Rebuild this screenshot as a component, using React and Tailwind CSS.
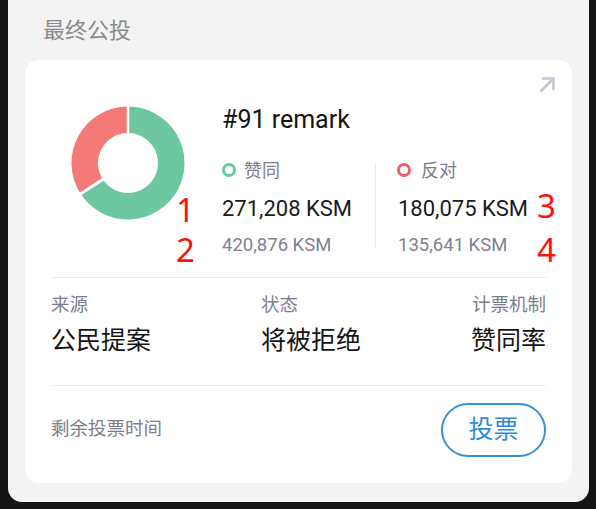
import React from "react";

const FONT = { fontFamily: "Roboto, 'Noto Sans CJK SC', 'Noto Sans', sans-serif" };

function Donut() {
  const c = 57;
  const rMid = 43.25;
  const t = (deg, r) => {
    const a = (deg * Math.PI) / 180;
    return [c + r * Math.sin(a), c - r * Math.cos(a)];
  };
  const split = 237;
  const [sx, sy] = t(0, rMid);
  const [ex, ey] = t(split, rMid);
  const [lx, ly] = t(split, 60);
  return (
    <svg width="114" height="114" viewBox="0 0 114 114">
      <path
        d={`M${sx} ${sy} A${rMid} ${rMid} 0 1 1 ${ex} ${ey}`}
        fill="none"
        stroke="#6dc8a2"
        strokeWidth="26.5"
      />
      <path
        d={`M${ex} ${ey} A${rMid} ${rMid} 0 0 1 ${sx} ${sy}`}
        fill="none"
        stroke="#f47a77"
        strokeWidth="26.5"
      />
      <line x1={c} y1={c} x2={c} y2={-2} stroke="#fff" strokeWidth="2.5" />
      <line x1={c} y1={c} x2={lx} y2={ly} stroke="#fff" strokeWidth="3" />
    </svg>
  );
}

function Ring({ color }) {
  return (
    <span
      className="inline-block w-[14px] h-[14px] rounded-full border-[3.5px] shrink-0"
      style={{ borderColor: color }}
    />
  );
}

const annot = { fontFamily: "'Noto Sans', sans-serif" };

export default function App() {
  return (
    <div className="w-[596px] h-[509px] bg-[#141414] overflow-hidden" style={FONT}>
      <div className="ml-[8px] w-[581px] h-[502px] bg-[#f3f3f3] rounded-b-[14px] px-[17px]">
        <div className="h-[60px] flex items-center pl-[18px] text-[22px] text-[#8a8a8a]">
          最终公投
        </div>
        <div className="relative h-[423px] bg-white rounded-[14px]">
          {/* arrow icon */}
          <svg
            className="absolute right-[16px] top-[16px]"
            width="18"
            height="18"
            viewBox="0 0 18 18"
            fill="none"
            stroke="#c3c7d8"
            strokeWidth="2.6"
          >
            <path d="M4 2.5 H15.5 V14" />
            <path d="M15.5 2.5 L2.5 15.5" />
          </svg>

          {/* top section */}
          <div className="h-[217px] flex">
            <div className="ml-[46px] mt-[46px]">
              <Donut />
            </div>
            <div className="ml-[37px] flex flex-col">
              <div className="mt-[45px] h-[30px] leading-[30px] text-[25px] text-[#141414]">
                #91 remark
              </div>
              <div className="mt-[23px] flex">
                <div className="w-[153px] flex flex-col">
                  <div className="h-[24px] flex items-center gap-[8px] text-[18px] text-[#7d7e8c]">
                    <Ring color="#6cc8a0" />
                    <span>赞同</span>
                  </div>
                  <div className="mt-[13px] h-[28px] leading-[28px] text-[22px] text-[#1b1b1b]">
                    271,208 KSM
                  </div>
                  <div className="mt-[10px] h-[24px] leading-[24px] text-[18.5px] text-[#80818f]">
                    420,876 KSM
                  </div>
                </div>
                <div className="w-px h-[84px] mt-[6px] bg-[#e6e6ee]" />
                <div className="ml-[22px] flex flex-col">
                  <div className="h-[24px] flex items-center gap-[10px] -ml-[1px] text-[18px] text-[#7d7e8c]">
                    <Ring color="#ea5f6b" />
                    <span>反对</span>
                  </div>
                  <div className="mt-[13px] h-[28px] leading-[28px] text-[22px] text-[#1b1b1b]">
                    180,075 KSM
                  </div>
                  <div className="mt-[10px] h-[24px] leading-[24px] text-[18.5px] text-[#80818f]">
                    135,641 KSM
                  </div>
                </div>
              </div>
            </div>
          </div>

          <div className="mx-[26px] h-px bg-[#ebebf0]" />

          {/* info row */}
          <div className="h-[107px] mx-[26px] flex pt-[15px]">
            <div className="w-[210px] flex flex-col">
              <div className="h-[24px] leading-[24px] text-[18.5px] text-[#7d7e8c]">来源</div>
              <div className="mt-[8px] h-[32px] leading-[32px] text-[25px] text-[#141414]">公民提案</div>
            </div>
            <div className="flex-1 flex flex-col">
              <div className="h-[24px] leading-[24px] text-[18.5px] text-[#7d7e8c]">状态</div>
              <div className="mt-[8px] h-[32px] leading-[32px] text-[25px] text-[#141414]">将被拒绝</div>
            </div>
            <div className="flex flex-col items-end">
              <div className="h-[24px] leading-[24px] text-[18.5px] text-[#7d7e8c]">计票机制</div>
              <div className="mt-[8px] h-[32px] leading-[32px] text-[25px] text-[#141414]">赞同率</div>
            </div>
          </div>

          <div className="mx-[26px] h-px bg-[#ebebf0]" />

          <div className="mx-[26px] pt-[17px] flex items-center justify-between">
            <div className="text-[18.5px] text-[#7d7e8c]">剩余投票时间</div>
            <button className="w-[105px] h-[54px] rounded-full border-[2px] border-[#3a90d6] text-[#2f8ad3] text-[25px] flex items-center justify-center">
              投票
            </button>
          </div>

          {/* annotations */}
          <div className="absolute left-[151px] top-[136px] text-[33px] leading-[28px] text-[#ff1010]" style={annot}>1</div>
          <div className="absolute left-[151px] top-[176px] text-[33px] leading-[28px] text-[#ff1010]" style={annot}>2</div>
          <div className="absolute left-[512px] top-[132px] text-[33px] leading-[28px] text-[#ff1010]" style={annot}>3</div>
          <div className="absolute left-[512px] top-[176px] text-[33px] leading-[28px] text-[#ff1010]" style={annot}>4</div>
        </div>
      </div>
    </div>
  );
}
